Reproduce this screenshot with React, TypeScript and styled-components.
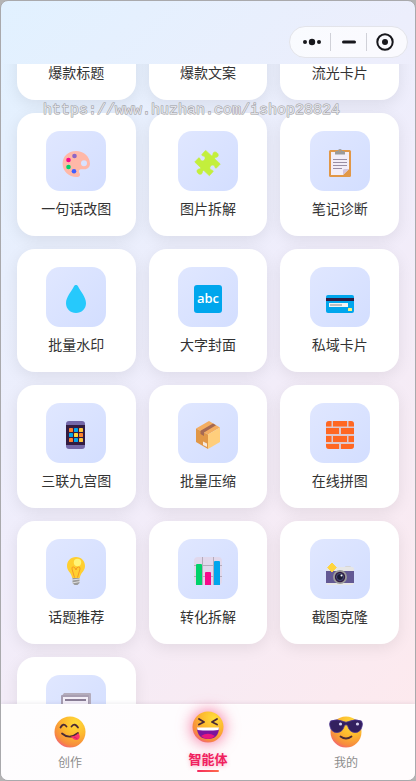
import React, { useLayoutEffect, useRef, useState } from "react";
import styled, { createGlobalStyle } from "styled-components";

const GlobalStyle = createGlobalStyle`
  * { box-sizing: border-box; }
  body {
    margin: 0;
    background: #b4b4b4;
    font-family: "Noto Sans CJK SC", "Noto Sans", sans-serif;
  }
  button {
    font: inherit;
    border: 0;
    padding: 0;
    background: none;
    cursor: pointer;
  }
`;

const Phone = styled.div`
  position: relative;
  display: flex;
  flex-direction: column;
  height: 100vh;
  overflow: hidden;
  border: 1px solid #a9a9ac;
  border-radius: 8px;
  background: linear-gradient(135deg, #e1f1ff 0%, #f0edfb 48%, #ffe9ec 100%);
`;

const TitleBar = styled.header`
  display: flex;
  flex: none;
  justify-content: flex-end;
  height: 63px;
  padding: 25px 7px 0 0;
`;

const Capsule = styled.div`
  display: flex;
  align-items: center;
  width: 119px;
  height: 32px;
  padding: 0 4px;
  border: 1px solid #e3e4ea;
  border-radius: 16px;
  background: rgba(255, 255, 255, 0.72);
`;

const CapsuleButton = styled.button`
  display: flex;
  flex: 1;
  align-items: center;
  justify-content: center;
  height: 18px;

  & + & {
    border-left: 1px solid #d0d1d8;
  }
`;

const Scroller = styled.main`
  flex: 1;
  min-height: 0;
  overflow-y: auto;
  scrollbar-width: none;
`;

const Grid = styled.div`
  display: grid;
  grid-template-columns: repeat(3, 1fr);
  gap: 13px;
  padding: 0 16px 16px;
`;

const Card = styled.button`
  display: flex;
  flex-direction: column;
  align-items: center;
  gap: 7px;
  min-height: 123px;
  padding: 18px 0;
  border-radius: 18px;
  background: #fff;
  box-shadow: 0 4px 16px rgba(0, 0, 0, 0.08);
`;

const IconTile = styled.span`
  display: flex;
  align-items: center;
  justify-content: center;
  width: 60px;
  height: 60px;
  padding-top: 4px;
  border-radius: 14px;
  background: linear-gradient(135deg, #e0e7ff, #d3deff);
`;

const CardLabel = styled.span`
  font-size: 14px;
  line-height: 20px;
  color: #333;
`;

const TabBar = styled.nav`
  display: flex;
  flex: none;
  height: 76px;
  border-top: 1px solid rgba(255, 255, 255, 0.6);
  background: rgba(255, 255, 255, 0.86);
  box-shadow: 0 -1px 4px rgba(40, 30, 70, 0.08);
`;

const Tab = styled.button<{ $active: boolean }>`
  display: flex;
  flex: 1;
  flex-direction: column;
  align-items: center;
  gap: ${(p) => (p.$active ? 5 : 3)}px;
  padding-top: ${(p) => (p.$active ? 5 : 10)}px;
`;

const Face = styled.span<{ $active: boolean }>`
  display: flex;
  filter: ${(p) => (p.$active ? "drop-shadow(0 0 8px rgba(240, 50, 110, 0.75))" : "none")};
`;

const TabLabel = styled.span<{ $active: boolean }>`
  display: flex;
  flex-direction: column;
  align-items: center;
  gap: 1px;
  font-size: ${(p) => (p.$active ? 13 : 12)}px;
  font-weight: ${(p) => (p.$active ? 700 : 400)};
  line-height: 20px;
  color: ${(p) => (p.$active ? "#f0215f" : "#8c8c8c")};
  text-shadow: ${(p) => (p.$active ? "0 1px 4px rgba(240, 50, 110, 0.35)" : "none")};

  &::after {
    content: "";
    width: 22px;
    height: 2px;
    border-radius: 1px;
    background: ${(p) => (p.$active ? "linear-gradient(90deg, #f5285f, #ff6b4a)" : "transparent")};
  }
`;

const Watermark = styled.div`
  position: absolute;
  top: 100px;
  left: 42px;
  font: 15px/20px "Liberation Mono", monospace;
  color: #e4e4e8;
  -webkit-text-stroke: 1px #98989c;
  paint-order: stroke fill;
  pointer-events: none;
`;

const Svg = ({ children }: { children: React.ReactNode }) => (
  <svg width="32" height="32" viewBox="0 0 32 32" aria-hidden="true">
    {children}
  </svg>
);

const Palette = () => (
  <Svg>
    <path
      fill="#ffb8a8"
      fillRule="evenodd"
      d="M16 4C8 4 2.6 9.700 2.600 16.500C2.600 24.500 9 30 16.500 30C20 30 20.800 27.800 19.500 26C18 23.700 19.500 22.300 21.500 22.300H24.500C28 22.300 30 19.500 30 16.500C29.500 9 23.500 4 16 4ZM24 13.200a3 3 0 1 1 0 6a3 3 0 0 1 0-6Z"
    />
    <circle cx="14.500" cy="9" r="2.300" fill="#8d65c5" />
    <circle cx="8.500" cy="13" r="2.300" fill="#f70a8d" />
    <circle cx="8.500" cy="20" r="2.300" fill="#00d26a" />
    <circle cx="14" cy="24.300" r="2.300" fill="#3f5fff" />
  </Svg>
);

const Puzzle = () => (
  <Svg>
    <g transform="rotate(43 15.500 16)">
      <path
        fill="#c3ef3c"
        stroke="#c3ef3c"
        strokeWidth=".6"
        strokeLinejoin="round"
        d="M6 8H13C14.400 8 14 6.600 13.500 6C11.800 3.800 13.500 2 15.700 2S19.600 3.800 17.900 6C17.400 6.600 17 8 18.400 8H25.500V13.200C25.500 14.600 24.300 14.200 23.600 13.800C21.600 12.600 19.800 14 19.800 16S21.600 19.400 23.600 18.200C24.300 17.800 25.500 17.400 25.500 18.800V24H18.400C17 24 17.400 25.400 17.900 26C19.600 28.200 17.900 30 15.700 30S11.800 28.200 13.500 26C14 25.400 14.400 24 13 24H5.500V18.800C5.500 17.400 6.700 17.800 7.400 18.200C9.400 19.400 11.200 18 11.200 16S9.400 12.600 7.400 13.800C6.700 14.200 5.500 14.600 5.500 13.200V8.500Q5.500 8 6 8Z"
      />
    </g>
  </Svg>
);

const Clipboard = () => (
  <Svg>
    <rect x="5" y="3" width="22" height="27" rx="1.500" fill="#e19747" />
    <path fill="#f3eef8" d="M7 5h18v17l-6 6H7z" />
    <path fill="#d3c4dd" d="M25 22h-4.500a1.500 1.500 0 0 0-1.500 1.500V28z" />
    <path
      fill="#9b9b9b"
      fillRule="evenodd"
      d="M14 4a2 2 0 0 1 4 0h1.500A1.500 1.500 0 0 1 21 5.500V7.500H11V5.500A1.500 1.500 0 0 1 12.500 4zM16 3.200a.8.8 0 1 0 0 1.600a.8.8 0 0 0 0-1.600Z"
    />
    <path stroke="#998ea4" strokeWidth="1" d="M9 12.500h14M9 15.500h14M9 18.500h14M9 21.500h9" />
  </Svg>
);

const Drop = () => (
  <Svg>
    <path
      fill="#26c9fc"
      d="M14 3.300C14.800 1.600 17.200 1.600 18 3.300C20.500 8.500 26 14 26 20.200C26 25.800 21.500 30 16 30S6 25.800 6 20.200C6 14 11.500 8.500 14 3.300Z"
    />
  </Svg>
);

const AbcText = styled.text`
  font: 600 13px "Open Sans", sans-serif;
  fill: #fff;
`;

const Abc = () => (
  <Svg>
    <rect x="2" y="2" width="28" height="28" rx="3" fill="#00a6ed" />
    <AbcText x="16" y="20" textAnchor="middle">
      abc
    </AbcText>
  </Svg>
);

const CreditCard = () => (
  <Svg>
    <rect x="2" y="12" width="28" height="18" rx="2" fill="#00a6ed" />
    <path fill="#321b41" d="M2 15h28v3H2z" />
    <path fill="#f4f4f4" d="M5 20h19v4H5z" />
    <path fill="#bebebe" d="M6 21h12v2H6z" />
    <rect x="24" y="25" width="4" height="3" rx=".5" fill="#fff478" />
  </Svg>
);

const TileColors = ["#ff822d", "#00a6ed", "#ffc83d", "#00a6ed", "#ffdb3c", "#ff822d", "#ff822d", "#00a6ed", "#ffc83d"];

const MobilePhone = () => (
  <Svg>
    <rect x="6" y="2" width="19" height="28" rx="3" fill="#7468a8" />
    <path fill="#321b41" d="M6 6h19v20H6z" />
    {TileColors.map((fill, i) => (
      <rect key={i} x={9 + (i % 3) * 5} y={9 + Math.floor(i / 3) * 5} width="4" height="4" rx=".4" fill={fill} />
    ))}
  </Svg>
);

const Package = () => (
  <Svg>
    <path fill="#f3ad61" d="M4 9.500L17 2L28 8.500L16 15.500z" />
    <path fill="#e19747" d="M4 9.500L16 15.500V30L4 23z" />
    <path fill="#ffce7c" d="M16 15.500L28 8.500V23L16 30z" />
    <path fill="#a56953" d="M8.500 11.700L21 4.400L24 6.200L12 13.500V17L8.500 15z" />
    <path fill="#f4e8e0" d="M11 22.500l4 2v3.500l-4-2z" />
  </Svg>
);

const Bricks = () => (
  <Svg>
    <rect x="2" y="2" width="28" height="28" rx="3" fill="#dcc8cf" />
    <path
      fill="#ff6723"
      d="M5 2H7.500V7.500H2V5A3 3 0 0 1 5 2ZM9 2H23V7.500H9ZM24.500 2H27A3 3 0 0 1 30 5V7.500H24.500ZM2 9H15V15H2ZM17 9H30V15H17ZM2 17H7.500V23H2ZM9 17H23V23H9ZM24.500 17H30V23H24.500ZM2 25H15V30H5A3 3 0 0 1 2 27ZM17 25H30V27A3 3 0 0 1 27 30H17Z"
    />
  </Svg>
);

const Bulb = () => (
  <Svg>
    <path fill="#9b9b9b" d="M12.500 22h7v6l-2 2h-3l-2-2z" />
    <path stroke="#e0e0e0" strokeWidth="1" d="M12 25l8-1M12 28l8-1.500" />
    <path
      fill="#ffcf30"
      d="M16 2C10.500 2 7 6 7 11C7 16 11 17.500 12 22Q12.200 23 13 23H19Q19.800 23 20 22C21 17.500 25 16 25 11C25 6 21.500 2 16 2Z"
    />
    <path fill="none" stroke="#f59a24" strokeWidth="1" d="M14.500 22.500L12 14Q11.500 11.500 13.500 12T16 15Q16.500 12 18.500 12T20 14L17.500 22.500" />
    <circle cx="17.500" cy="7.500" r="3.700" fill="#fff478" />
  </Svg>
);

const BarChart = () => (
  <Svg>
    <rect x="2" y="2" width="28" height="28" rx="4" fill="#e1d8ec" />
    <path fill="none" stroke="#b4acbc" d="M10.500 2v28M21.500 2v28M2 10.500h28M2 21.500h28" />
    <path fill="#00d26a" d="M5 9h4q1 0 1 1v20H4V10q0-1 1-1z" />
    <path fill="#f70a8d" d="M14 17h4q1 0 1 1v12h-6V18q0-1 1-1z" />
    <path fill="#00a6ed" d="M23 6h4q1 0 1 1v23h-6V7q0-1 1-1z" />
  </Svg>
);

const Camera = () => (
  <Svg>
    <path fill="#d6d6d6" d="M21 12q0-1 1-1h4q1 0 1 1v2h-6z" />
    <rect x="2" y="12" width="28" height="18" rx="2" fill="#e6e6e6" />
    <path fill="#635994" d="M2 16h28v12H2z" />
    <path fill="#ffd53e" stroke="#ffd53e" strokeLinejoin="round" d="M8 8l4.300 4.500L8 17l-4.300-4.500z" />
    <circle cx="16" cy="22" r="7" fill="#9b9b9b" />
    <circle cx="16" cy="22" r="5.200" fill="#321b41" />
    <circle cx="16" cy="22" r="3.500" fill="#1c1c35" stroke="#46507c" />
    <circle cx="17.500" cy="20.500" r="1" fill="#fff" />
  </Svg>
);

const Newspaper = () => (
  <Svg>
    <path fill="#b4acbc" d="M1 6l3-4h26q1 0 1 1v24l-3 3H1z" />
    <rect x="1" y="4" width="28" height="26" rx="1" fill="#a89eb2" />
    <path fill="#f3eef8" d="M3 6h25v23H3z" />
    <path fill="#8a7d96" d="M5 8h21v2H5zM5 13h9v1H5zM5 17h9v1H5zM17 13h9v8h-9z" />
  </Svg>
);

const FaceSvg = ({ id, children }: { id: string; children: React.ReactNode }) => (
  <svg width="34" height="34" viewBox="0 0 34 34" aria-hidden="true">
    <defs>
      <radialGradient id={id} cx=".68" cy=".22" r=".9">
        <stop offset="0" stopColor="#ffdc3a" />
        <stop offset=".45" stopColor="#fdb92e" />
        <stop offset=".8" stopColor="#f78b3f" />
        <stop offset="1" stopColor="#f0548a" />
      </radialGradient>
    </defs>
    <circle cx="17" cy="17" r="15.500" fill={`url(#${id})`} />
    {children}
  </svg>
);

const YumFace = () => (
  <FaceSvg id="yum">
    <path
      fill="none"
      stroke="#4a2a35"
      strokeWidth="1.800"
      strokeLinecap="round"
      d="M7.500 12.500Q10 7.500 13.500 11.500M18.500 11.500Q22 7.500 25 12.500M9 18.500Q16.500 25 25 18"
    />
    <path fill="#f8356d" d="M17.500 21.700Q22 21.500 25 18.300Q28 21 26 23.800Q23.500 26.300 20.500 24Q19 22.800 17.500 21.700Z" />
    <path fill="none" stroke="#c81f62" strokeWidth=".8" strokeLinecap="round" d="M21 22l3 1.500" />
  </FaceSvg>
);

const LaughFace = () => (
  <FaceSvg id="laugh">
    <path
      fill="none"
      stroke="#4a2a35"
      strokeWidth="1.900"
      strokeLinecap="round"
      strokeLinejoin="round"
      d="M8 9L13 12L8 14.500M26 9L21 12L26 14.500"
    />
    <path fill="#7c149c" d="M6 18H28Q27.500 29 17 29T6 18Z" />
    <path fill="#fff" d="M6 17.500H28L27.500 20Q17 21 6.500 20Z" />
    <path fill="#e8177e" d="M10 26Q17 21.500 24 26Q21 29 17 29T10 26Z" />
  </FaceSvg>
);

const CoolFace = () => (
  <FaceSvg id="cool">
    <path fill="none" stroke="#4a2a35" strokeWidth="1.800" strokeLinecap="round" d="M11.500 21.500Q17 25.500 22.500 21.500" />
    <path
      fill="#33205f"
      stroke="#4c3590"
      strokeWidth=".8"
      d="M1.500 6Q8 3.500 14.500 6.500Q17 8 19.500 6.500Q26 3.500 32.500 6Q34 8.500 33 11.500Q31.500 17.500 26 17.500Q20.500 17.500 18.500 10.500Q17 9 15.500 10.500Q13.500 17.500 8 17.500Q2.500 17.500 1 11.500Q0 8.500 1.500 6Z"
    />
    <circle cx="11.500" cy="9" r="1.600" fill="#d8d2f2" />
    <circle cx="28.500" cy="9" r="1.600" fill="#d8d2f2" />
  </FaceSvg>
);

type Tool = { id: string; label?: string; Icon?: React.ComponentType };

const tools: Tool[] = [
  { id: "title", label: "爆款标题" },
  { id: "copy", label: "爆款文案" },
  { id: "glow", label: "流光卡片" },
  { id: "edit", label: "一句话改图", Icon: Palette },
  { id: "split", label: "图片拆解", Icon: Puzzle },
  { id: "note", label: "笔记诊断", Icon: Clipboard },
  { id: "mark", label: "批量水印", Icon: Drop },
  { id: "cover", label: "大字封面", Icon: Abc },
  { id: "private", label: "私域卡片", Icon: CreditCard },
  { id: "nine", label: "三联九宫图", Icon: MobilePhone },
  { id: "zip", label: "批量压缩", Icon: Package },
  { id: "collage", label: "在线拼图", Icon: Bricks },
  { id: "topic", label: "话题推荐", Icon: Bulb },
  { id: "convert", label: "转化拆解", Icon: BarChart },
  { id: "clone", label: "截图克隆", Icon: Camera },
  { id: "news", Icon: Newspaper },
];

const tabs = [
  { label: "创作", Icon: YumFace },
  { label: "智能体", Icon: LaughFace },
  { label: "我的", Icon: CoolFace },
];

const INITIAL_SCROLL = 87;

export default function App() {
  const scroller = useRef<HTMLElement>(null);
  const [current, setCurrent] = useState("智能体");

  useLayoutEffect(() => {
    if (scroller.current) scroller.current.scrollTop = INITIAL_SCROLL;
  }, []);

  return (
    <>
      <GlobalStyle />
      <Phone>
        <TitleBar>
          <Capsule>
            <CapsuleButton aria-label="更多">
              <svg width="20" height="8" viewBox="0 0 20 8">
                <circle cx="3" cy="4" r="2" fill="#17171c" />
                <circle cx="10" cy="4" r="3.200" fill="#17171c" />
                <circle cx="17" cy="4" r="2" fill="#17171c" />
              </svg>
            </CapsuleButton>
            <CapsuleButton aria-label="最小化">
              <svg width="14" height="4" viewBox="0 0 14 4">
                <rect y=".5" width="14" height="3" rx="1.500" fill="#17171c" />
              </svg>
            </CapsuleButton>
            <CapsuleButton aria-label="关闭">
              <svg width="18" height="18" viewBox="0 0 18 18">
                <circle cx="9" cy="9" r="7.700" fill="none" stroke="#17171c" strokeWidth="2" />
                <circle cx="9" cy="9" r="3" fill="#17171c" />
              </svg>
            </CapsuleButton>
          </Capsule>
        </TitleBar>
        <Scroller ref={scroller}>
          <Grid>
            {tools.map(({ id, label, Icon }) => (
              <Card key={id}>
                <IconTile>{Icon && <Icon />}</IconTile>
                {label && <CardLabel>{label}</CardLabel>}
              </Card>
            ))}
          </Grid>
        </Scroller>
        <TabBar>
          {tabs.map(({ label, Icon }) => {
            const active = label === current;
            return (
              <Tab key={label} $active={active} onClick={() => setCurrent(label)}>
                <Face $active={active}>
                  <Icon />
                </Face>
                <TabLabel $active={active}>{label}</TabLabel>
              </Tab>
            );
          })}
        </TabBar>
        <Watermark>https://www.huzhan.com/ishop28824</Watermark>
      </Phone>
    </>
  );
}
